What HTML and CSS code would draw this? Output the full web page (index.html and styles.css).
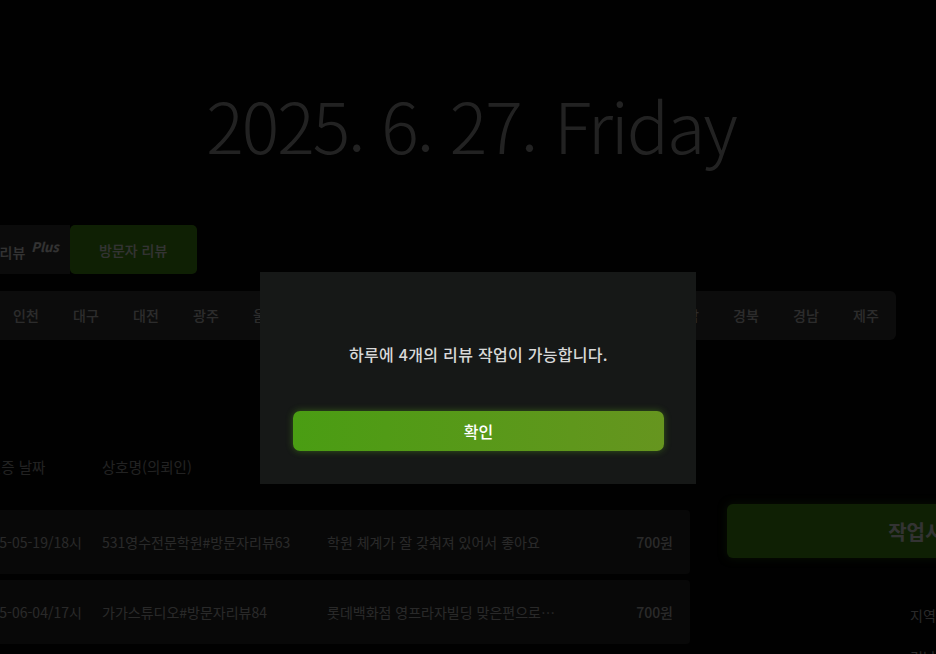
FILE: index.html
```
<!DOCTYPE html>
<html lang="ko">
<head>
  <meta charset="UTF-8">
  <meta name="viewport" content="width=device-width, initial-scale=1.0">
  <title>리뷰 작업</title>

  <link rel="stylesheet" href="styles.css">
</head>
<body>
  <main class="page">
    <h1 class="today">2025. 6. 27. Friday</h1>

    <div class="board">
      <div class="tabs">
        <button class="tab">방문자 리뷰 <sup>Plus</sup></button>
        <button class="tab active">방문자 리뷰</button>
      </div>

      <nav class="regions">
        <a>서울</a><a>경기</a><a>인천</a><a>대구</a><a>대전</a><a>광주</a>
        <a>울산</a><a>부산</a><a>세종</a><a>강원</a><a>충북</a><a>충남</a>
        <a>전북</a><a>전남</a><a>경북</a><a>경남</a><a>제주</a>
      </nav>

      <div class="content">
        <section class="jobs">
          <div class="job-head">
            <span>No</span>
            <span class="date">인증 날짜</span>
            <span>상호명(의뢰인)</span>
            <span>리뷰 내용</span>
            <span class="price">금액</span>
          </div>

          <div class="job">
            <span>1</span>
            <span>2025-05-19/18시</span>
            <span>531영수전문학원#방문자리뷰63</span>
            <span class="review">학원 체계가 잘 갖춰져 있어서 좋아요</span>
            <span class="price">700원</span>
          </div>

          <div class="job">
            <span>2</span>
            <span>2025-06-04/17시</span>
            <span>가가스튜디오#방문자리뷰84</span>
            <span class="review">롯데백화점 영프라자빌딩 맞은편으로오시면 됩니다</span>
            <span class="price">700원</span>
          </div>
        </section>

        <aside class="side">
          <button class="start">작업시작</button>

          <div class="info">
            <p>지역</p>
            <p>경남</p>
          </div>
        </aside>
      </div>
    </div>
  </main>

  <div class="overlay">
    <div class="modal">
      <p>하루에 4개의 리뷰 작업이 가능합니다.</p>
      <button class="confirm">확인</button>
    </div>
  </div>
</body>
</html>
```

FILE: styles.css
```
* {
  margin: 0;
  padding: 0;
  box-sizing: border-box;
}

html, body {
  height: 100%;
}

body, button {
  font: 14px 'Noto Sans CJK KR', 'Noto Sans', sans-serif;
  color: #ffffff;
}

body {
  background: #050505;
  overflow: hidden;
}

button {
  border: none;
  background: none;
}

.today {
  padding: 88px 0 0 6px;
  text-align: center;
  font-size: 70px;
  line-height: 72px;
  font-weight: 300;
  letter-spacing: -2px;
  color: #aaaaaa;
}

.board {
  width: 1247px;
  margin: 65px 0 0 -124px;
}

.tabs {
  display: flex;
  padding-left: 53px;
}

.tab {
  height: 49px;
  padding: 0 11px 0 28px;
  background: #3a3a3a;
  border-radius: 5px 0 0 5px;
  font-weight: 500;
}

.tab sup {
  font-style: italic;
  font-weight: 700;
  font-size: 13px;
  margin-left: 2px;
}

.tab.active {
  width: 127px;
  padding: 0;
  background: #4c9f17;
  border-radius: 5px;
}

.regions {
  display: flex;
  width: 1020px;
  margin-top: 17px;
  background: #3e3e3e;
  border-radius: 6px;
}

.regions a {
  width: 60px;
  line-height: 49px;
  text-align: center;
  font-weight: 500;
  color: #dddddd;
}

.content {
  display: flex;
  gap: 37px;
  margin-top: 101px;
}

.jobs {
  width: 814px;
  display: flex;
  flex-direction: column;
  gap: 6px;
}

.job-head, .job {
  display: grid;
  grid-template-columns: 84px 126px 225px 240px 1fr;
  align-items: center;
  padding: 0 17px 0 16px;
}

.job-head {
  height: 50px;
  margin-bottom: 13px;
  font-size: 14.5px;
  color: #aaaaaa;
}

.job-head .date {
  padding-left: 12px;
}

.job {
  height: 64px;
  background: #282828;
  border-radius: 4px;
  color: #cccccc;
}

.job .review {
  white-space: nowrap;
  overflow: hidden;
  text-overflow: ellipsis;
}

.price {
  text-align: right;
}

.job .price {
  font-weight: 500;
  color: #d0d0d0;
}

.side {
  width: 396px;
  padding-top: 63px;
}

.start {
  width: 100%;
  height: 54px;
  background: #4c9f17;
  border-radius: 6px;
  font-size: 20px;
  font-weight: 700;
  box-shadow: 0 0 8px rgba(76, 159, 23, 0.5);
}

.info {
  margin-top: 47px;
  padding-left: 183px;
  color: #cccccc;
}

.info p {
  line-height: 20px;
  margin-bottom: 22px;
}

.overlay {
  position: fixed;
  inset: 0;
  padding: 102px 0 0 20px;
  background: rgba(0, 0, 0, 0.8);

  display: flex;
  align-items: center;
  justify-content: center;
}

.modal {
  width: 436px;
  height: 212px;
  padding: 71px 32px 33px 33px;
  background: #161817;

  display: flex;
  flex-direction: column;
  align-items: center;
  justify-content: space-between;
}

.modal p {
  font-size: 16px;
  line-height: 22px;
  font-weight: 500;
  letter-spacing: 0.3px;
  color: #d8d8d8;
}

.confirm {
  width: 100%;
  height: 40px;
  border-radius: 7px;
  background: linear-gradient(90deg, #4a9d13, #66951f);
  box-shadow: 0 0 7px rgba(90, 170, 30, 0.45);
  font-size: 16px;
  font-weight: 500;
}
```
